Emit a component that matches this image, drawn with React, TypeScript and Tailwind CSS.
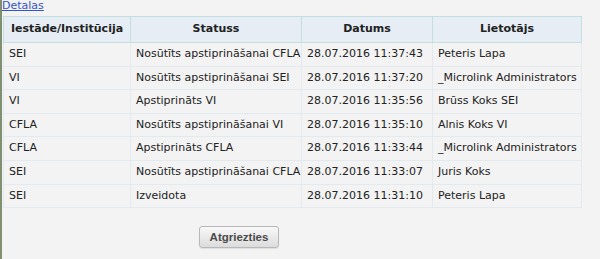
import React from 'react';

const rows = [
  { org: 'SEI', status: 'Nosūtīts apstiprināšanai CFLA', date: '28.07.2016 11:37:43', user: 'Peteris Lapa' },
  { org: 'VI', status: 'Nosūtīts apstiprināšanai SEI', date: '28.07.2016 11:37:20', user: '_Microlink Administrators' },
  { org: 'VI', status: 'Apstiprināts VI', date: '28.07.2016 11:35:56', user: 'Brūss Koks SEI' },
  { org: 'CFLA', status: 'Nosūtīts apstiprināšanai VI', date: '28.07.2016 11:35:10', user: 'Alnis Koks VI' },
  { org: 'CFLA', status: 'Apstiprināts CFLA', date: '28.07.2016 11:33:44', user: '_Microlink Administrators' },
  { org: 'SEI', status: 'Nosūtīts apstiprināšanai CFLA', date: '28.07.2016 11:33:07', user: 'Juris Koks' },
  { org: 'SEI', status: 'Izveidota', date: '28.07.2016 11:31:10', user: 'Peteris Lapa' },
];

export default function App() {
  return (
    <div className="min-h-[259px] bg-[#f3f3f3] border-l-2 border-[#7f8f6f] font-['DejaVu_Sans',Verdana,sans-serif] text-[11px] text-[#222]">
      <a href="#" className="block h-[16px] leading-[12px] text-[#3355cc] underline">
        Detalas
      </a>
      <table className="ml-px border-collapse table-fixed w-[578px]">
        <colgroup>
          <col className="w-[127px]" />
          <col className="w-[171px]" />
          <col className="w-[131px]" />
          <col className="w-[149px]" />
        </colgroup>
        <thead>
          <tr className="h-[26px] bg-[#e6edf5]">
            {['Iestāde/Institūcija', 'Statuss', 'Datums', 'Lietotājs'].map((h) => (
              <th key={h} className="border border-[#c3e0e0] text-center font-bold text-[11px] text-[#222] px-1 whitespace-nowrap">
                {h}
              </th>
            ))}
          </tr>
        </thead>
        <tbody>
          {rows.map((r, i) => (
            <tr key={i} className="h-[23.6px]">
              <td className="border border-[#e2eaf0] pl-[5px] whitespace-nowrap">{r.org}</td>
              <td className="border border-[#e2eaf0] pl-[5px] whitespace-nowrap">{r.status}</td>
              <td className="border border-[#e2eaf0] pl-[5px] whitespace-nowrap">{r.date}</td>
              <td className="border border-[#e2eaf0] pl-[5px] whitespace-nowrap">{r.user}</td>
            </tr>
          ))}
        </tbody>
      </table>
      <div className="pt-[18px] pl-[197px]">
        <button className="w-[80px] h-[22px] rounded-[3px] border border-[#b8b8b8] bg-gradient-to-b from-[#f8f8f8] to-[#dcdcdc] font-['Liberation_Sans',Arial,sans-serif] font-bold text-[11.5px] text-[#4a4a4a] shadow-[0_1px_1px_rgba(0,0,0,0.08)]">
          Atgriezties
        </button>
      </div>
    </div>
  );
}
